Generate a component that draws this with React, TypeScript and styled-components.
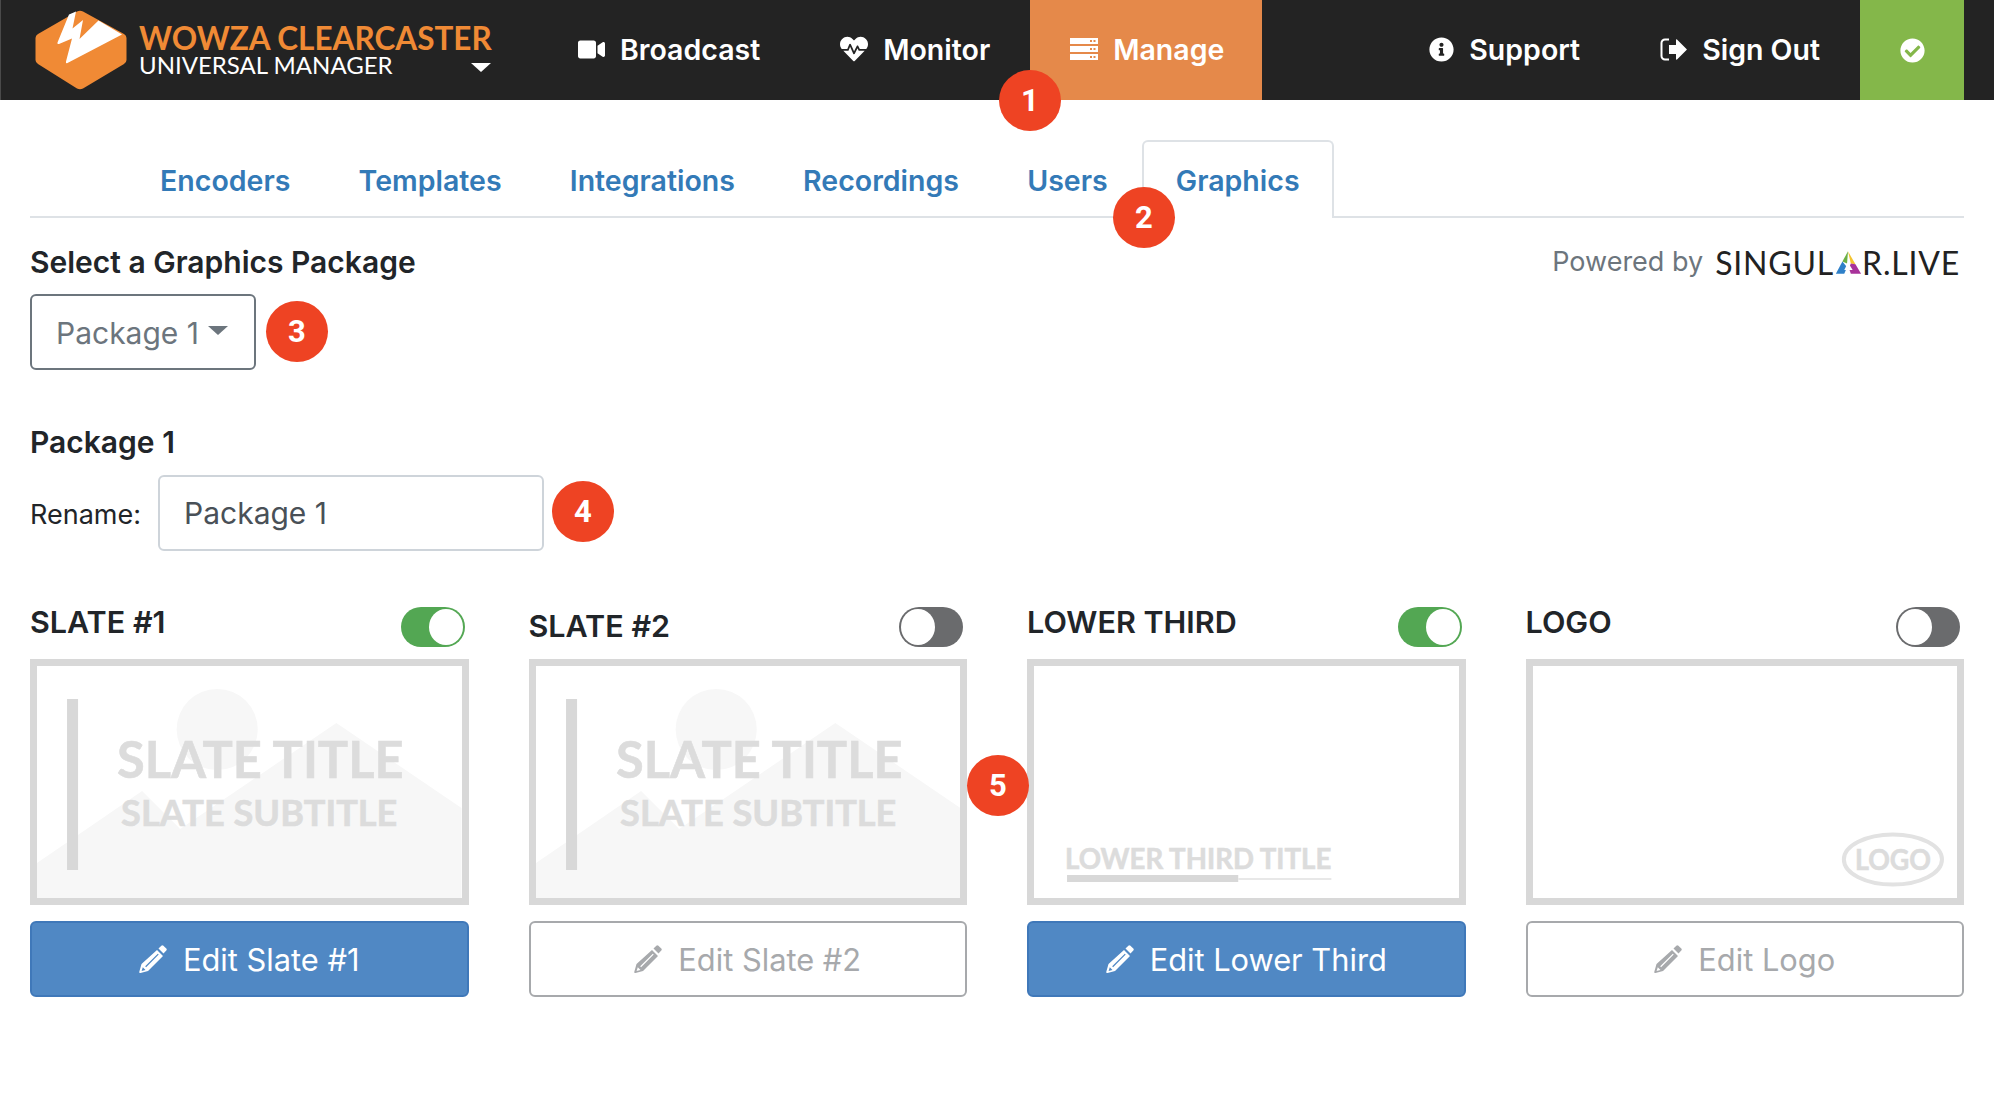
import styled, { createGlobalStyle } from "styled-components";
import { FaCheckCircle, FaHeartbeat, FaInfoCircle, FaVideo } from "react-icons/fa";

const GlobalStyle = createGlobalStyle`
  html, body {
    margin: 0;
    padding: 0;
    background: #fff;
    font-family: "Inter", "Liberation Sans", sans-serif;
    color: #212529;
  }
  * { box-sizing: border-box; }
`;

const Page = styled.div`
  position: relative;
  width: 1994px;
  height: 1096px;
  overflow: hidden;
`;

const Header = styled.header`
  display: flex;
  align-items: stretch;
  height: 100px;
  padding-right: 30px;
  background: #232323;
  border-left: 1px solid #4a4a4a;
`;

const Brand = styled.div`
  display: flex;
  align-items: center;
  gap: 12px;
  width: 537px;
  padding-left: 34px;
`;

const BrandText = styled.div`
  display: flex;
  flex-direction: column;
  width: 352px;
  font-family: "Lato", sans-serif;
`;

const BrandTitle = styled.div`
  color: #f08a35;
  font-size: 31.5px;
  font-weight: 700;
  line-height: 30px;
  white-space: nowrap;
`;

const BrandSubRow = styled.div`
  display: flex;
  align-items: center;
  justify-content: space-between;
`;

const BrandSub = styled.div`
  color: #fff;
  font-size: 24px;
  line-height: 24px;
  white-space: nowrap;
`;

const BrandCaret = styled.span`
  width: 0;
  height: 0;
  margin-top: 4px;
  border-left: 10px solid transparent;
  border-right: 10px solid transparent;
  border-top: 9px solid #fff;
`;

const NavItem = styled.a<{ $active?: boolean }>`
  display: flex;
  align-items: center;
  gap: 15px;
  padding: 0 ${(p) => (p.$active ? "38px" : "40px")} 2px 40px;
  color: #fff;
  background: ${(p) => (p.$active ? "#e5894a" : "transparent")};
  font-size: 28.5px;
  font-weight: 600;
  white-space: nowrap;
`;

const NavSpacer = styled.div`
  flex: 1;
`;

const StatusBlock = styled.div`
  display: flex;
  align-items: center;
  justify-content: center;
  width: 104px;
  color: #fff;
  background: #84b74a;
`;

const Main = styled.main`
  padding: 40px 30px 0;
`;

const Tabs = styled.nav`
  display: flex;
  height: 78px;
  padding-left: 96px;
  border-bottom: 2px solid #dee2e6;
`;

const Tab = styled.a<{ $active?: boolean }>`
  display: flex;
  align-items: center;
  height: 78px;
  padding: 0 32.1px;
  color: #337ab7;
  background: ${(p) => (p.$active ? "#fff" : "transparent")};
  font-size: 28.5px;
  font-weight: 600;
  border: 2px solid ${(p) => (p.$active ? "#dee2e6" : "transparent")};
  border-bottom: none;
  border-radius: 6px 6px 0 0;
  white-space: nowrap;
`;

const TopRow = styled.div`
  display: flex;
  align-items: flex-start;
  justify-content: space-between;
  margin-top: 24px;
`;

const SectionTitle = styled.h2<{ $top?: number; $bottom?: number }>`
  margin: ${(p) => p.$top ?? 0}px 0 ${(p) => p.$bottom ?? 12}px;
  font-size: 30px;
  font-weight: 600;
  line-height: 40px;
`;

const Powered = styled.div`
  display: flex;
  align-items: center;
  gap: 12px;
  padding: 0 4px 2px 0;
  height: 40px;
  color: #6c757d;
  font-size: 27px;
`;

const SingularMark = styled.span`
  display: flex;
  align-items: center;
  margin-top: 2px;
  color: #222;
  font-family: "Lato", sans-serif;
  font-size: 32px;
  letter-spacing: 0.8px;
`;

const DropdownBox = styled.div`
  display: flex;
  align-items: center;
  gap: 9px;
  width: 226px;
  height: 76px;
  padding: 2px 0 0 24px;
  color: #6c757d;
  font-size: 30px;
  border: 2px solid #6c757d;
  border-radius: 6px;
`;

const DropdownCaret = styled.span`
  width: 0;
  height: 0;
  margin-top: -6px;
  border-left: 10px solid transparent;
  border-right: 10px solid transparent;
  border-top: 9px solid #6c757d;
`;

const RenameRow = styled.div`
  display: flex;
  align-items: center;
  gap: 17px;
`;

const RenameLabel = styled.label`
  padding-top: 2px;
  font-size: 27px;
`;

const RenameInput = styled.div`
  display: flex;
  align-items: center;
  width: 386px;
  height: 76px;
  padding-left: 24px;
  color: #495057;
  font-size: 30px;
  border: 2px solid #ced4da;
  border-radius: 6px;
`;

const Cards = styled.section`
  display: grid;
  grid-template-columns: repeat(4, 1fr);
  gap: 60px;
  margin-top: 50px;
`;

const CardHead = styled.div`
  display: flex;
  align-items: flex-start;
  justify-content: space-between;
  height: 58px;
`;

const CardTitle = styled.h3<{ $drop?: boolean }>`
  margin: ${(p) => (p.$drop ? "4px" : "0")} 0 0;
  font-size: 30.5px;
  font-weight: 600;
  line-height: 42px;
`;

const Toggle = styled.div<{ $on: boolean }>`
  display: flex;
  justify-content: ${(p) => (p.$on ? "flex-end" : "flex-start")};
  align-items: center;
  width: 64px;
  height: 40px;
  margin: 6px 4px 0 0;
  padding: 0 2px;
  background: ${(p) => (p.$on ? "#53a753" : "#6a6b6d")};
  border-radius: 20px;
`;

const Knob = styled.span`
  width: 34px;
  height: 36px;
  background: #fff;
  border-radius: 50%;
`;

const Preview = styled.div`
  height: 246px;
  margin-bottom: 16px;
  background: #fff;
  border: 7px solid #d8d8d8;
  svg {
    display: block;
    width: 100%;
    height: 100%;
  }
`;

const ThumbText = styled.text<{ $size: number }>`
  fill: #dcdcdc;
  stroke: #dcdcdc;
  stroke-width: 0.6px;
  font-family: "Lato", sans-serif;
  font-size: ${(p) => p.$size}px;
  font-weight: 700;
`;

const EditButton = styled.button<{ $on: boolean }>`
  display: flex;
  align-items: center;
  justify-content: center;
  gap: 16px;
  width: 100%;
  height: 76px;
  padding: 0;
  color: ${(p) => (p.$on ? "#fff" : "#a7a9ac")};
  background: ${(p) => (p.$on ? "#5088c4" : "#fff")};
  font-family: inherit;
  font-size: 30.8px;
  border: 2px solid ${(p) => (p.$on ? "#3f78b9" : "#a7a9ac")};
  border-radius: 6px;
`;

const Badge = styled.div<{ $x: number; $y: number }>`
  position: absolute;
  left: ${(p) => p.$x - 31}px;
  top: ${(p) => p.$y - 30}px;
  display: flex;
  align-items: center;
  justify-content: center;
  width: 62px;
  height: 61px;
  color: #fff;
  background: #ee4323;
  font-family: "Roboto", sans-serif;
  font-size: 31px;
  font-weight: 700;
  border-radius: 50%;
`;

const Logo = () => (
  <svg width="92" height="80" viewBox="5 5 92 80">
    <path
      d="M47 6.500q3-1.500 6 0L94 29q2.500 1.500 2.500 4v22q0 2.500-2.500 4L53 83.500q-3 1.500-6 0L8 59q-2.500-1.500-2.500-4V33q0-2.500 2.500-4Z"
      fill="#f08a35"
    />
    <path d="M39 9.500 46 6.500 42.500 23.500 53 15 49.500 34 68.500 15.500 92 29.500 37.500 58q-2 1-1.500-1.500L42 33.500 29 39q-2 .5-1.500-1.500Z" fill="#fff" />
  </svg>
);

const ServerIcon = () => (
  <svg width="28" height="22" viewBox="0 0 28 22" fill="currentColor">
    <path fillRule="evenodd" d="M0 0h28v6H0ZM20 2v2h2V2Zm3.500 0v2h2V2Z" />
    <path fillRule="evenodd" d="M0 8h28v6H0ZM20 10v2h2v-2Zm3.500 0v2h2v-2Z" />
    <path fillRule="evenodd" d="M0 16h28v6H0ZM20 18v2h2v-2Zm3.500 0v2h2v-2Z" />
  </svg>
);

const SignOutIcon = () => (
  <svg width="27" height="23" viewBox="0 0 27 23">
    <path d="M9 1.500H5A3.500 3.500 0 0 0 1.500 5v13A3.500 3.500 0 0 0 5 21.500h4" fill="none" stroke="currentColor" strokeWidth="2" />
    <path d="M9 7h7V2q0-1 1-.5L26.500 11q.7.500 0 1L17 21.500q-1 .5-1-.5v-5H9Z" fill="currentColor" />
  </svg>
);

const PencilIcon = () => (
  <svg width="28" height="28" viewBox="0 0 28 28" fill="currentColor">
    <path d="M19.500 3.500 22.400.7q1-.9 2 0l2.900 2.900q.9 1 0 2L24.500 8.500Z" />
    <path
      fillRule="evenodd"
      d="M18 5l6 6L9 26 1.500 28q-1.500.2-1.200-1.300L2.500 19ZM18.800 8.700 6.200 21.300l.9.900L19.700 9.600ZM3.800 22.200 2.600 26l3.900-1.100Z"
    />
  </svg>
);

const SingularA = () => (
  <svg width="28" height="23" viewBox="0 0 30 24">
    <path d="M15 0 9 11l5 2Z" fill="#6cb043" />
    <path d="M15 0l8 14-5-1Z" fill="#f4c430" />
    <path d="M9 11 2 24h9l3-7Z" fill="#2f80c8" />
    <path d="M18 13l5 1 6 10H18l-2-6Z" fill="#a8329a" />
    <path d="M15 12l5 8H11Z" fill="#fff" />
  </svg>
);

const SlateThumb = () => (
  <svg viewBox="0 0 424 232" preserveAspectRatio="none">
    <circle cx="180" cy="63.500" r="40.500" fill="#f7f7f7" />
    <path d="M0 197 105 125 143 163 299 57 424 142V232H0Z" fill="#f7f7f7" />
    <rect x="30" y="33" width="11" height="171" fill="#d8d8d8" />
    <ThumbText $size={51} x="80" y="112" textLength="286" lengthAdjust="spacingAndGlyphs">
      SLATE TITLE
    </ThumbText>
    <ThumbText $size={37} x="84" y="160" textLength="276" lengthAdjust="spacingAndGlyphs">
      SLATE SUBTITLE
    </ThumbText>
  </svg>
);

const LowerThirdThumb = () => (
  <svg viewBox="0 0 424 232" preserveAspectRatio="none">
    <ThumbText $size={29} x="31" y="203" textLength="266" lengthAdjust="spacingAndGlyphs">
      LOWER THIRD TITLE
    </ThumbText>
    <rect x="33" y="209" width="171" height="7" fill="#d8d8d8" />
    <rect x="204" y="212" width="93" height="2" fill="#e8e8e8" />
  </svg>
);

const LogoThumb = () => (
  <svg viewBox="0 0 424 232" preserveAspectRatio="none">
    <ellipse cx="359.500" cy="193.500" rx="49" ry="25" fill="none" stroke="#e2e2e2" strokeWidth="4" />
    <ThumbText $size={29} x="321.500" y="204" textLength="76" lengthAdjust="spacingAndGlyphs">
      LOGO
    </ThumbText>
  </svg>
);

const cards = [
  { title: "SLATE #1", on: true, button: "Edit Slate #1", thumb: <SlateThumb /> },
  { title: "SLATE #2", on: false, drop: true, button: "Edit Slate #2", thumb: <SlateThumb /> },
  { title: "LOWER THIRD", on: true, button: "Edit Lower Third", thumb: <LowerThirdThumb /> },
  { title: "LOGO", on: false, button: "Edit Logo", thumb: <LogoThumb /> },
];

const tabs = ["Encoders", "Templates", "Integrations", "Recordings", "Users"];

const badges = [
  { n: 1, x: 1030, y: 100 },
  { n: 2, x: 1144, y: 217 },
  { n: 3, x: 297, y: 331 },
  { n: 4, x: 583, y: 511 },
  { n: 5, x: 998, y: 785 },
];

const App = () => {
  return (
    <Page>
      <GlobalStyle />
      <Header>
        <Brand>
          <Logo />
          <BrandText>
            <BrandTitle>WOWZA CLEARCASTER</BrandTitle>
            <BrandSubRow>
              <BrandSub>UNIVERSAL MANAGER</BrandSub>
              <BrandCaret />
            </BrandSubRow>
          </BrandText>
        </Brand>
        <NavItem>
          <FaVideo size={27} />
          Broadcast
        </NavItem>
        <NavItem>
          <FaHeartbeat size={28} />
          Monitor
        </NavItem>
        <NavItem $active>
          <ServerIcon />
          Manage
        </NavItem>
        <NavSpacer />
        <NavItem>
          <FaInfoCircle size={25} />
          Support
        </NavItem>
        <NavItem>
          <SignOutIcon />
          Sign Out
        </NavItem>
        <StatusBlock>
          <FaCheckCircle size={25} />
        </StatusBlock>
      </Header>
      <Main>
        <Tabs>
          {tabs.map((t) => (
            <Tab key={t}>{t}</Tab>
          ))}
          <Tab $active>Graphics</Tab>
        </Tabs>
        <TopRow>
          <SectionTitle>Select a Graphics Package</SectionTitle>
          <Powered>
            Powered by
            <SingularMark>
              SINGUL
              <SingularA />
              R.LIVE
            </SingularMark>
          </Powered>
        </TopRow>
        <DropdownBox>
          Package 1
          <DropdownCaret />
        </DropdownBox>
        <SectionTitle $top={52} $bottom={13}>
          Package 1
        </SectionTitle>
        <RenameRow>
          <RenameLabel>Rename:</RenameLabel>
          <RenameInput>Package 1</RenameInput>
        </RenameRow>
        <Cards>
          {cards.map((c) => (
            <div key={c.title}>
              <CardHead>
                <CardTitle $drop={c.drop}>{c.title}</CardTitle>
                <Toggle $on={c.on}>
                  <Knob />
                </Toggle>
              </CardHead>
              <Preview>{c.thumb}</Preview>
              <EditButton $on={c.on}>
                <PencilIcon />
                {c.button}
              </EditButton>
            </div>
          ))}
        </Cards>
      </Main>
      {badges.map((b) => (
        <Badge key={b.n} $x={b.x} $y={b.y}>
          {b.n}
        </Badge>
      ))}
    </Page>
  );
};

export default App;
